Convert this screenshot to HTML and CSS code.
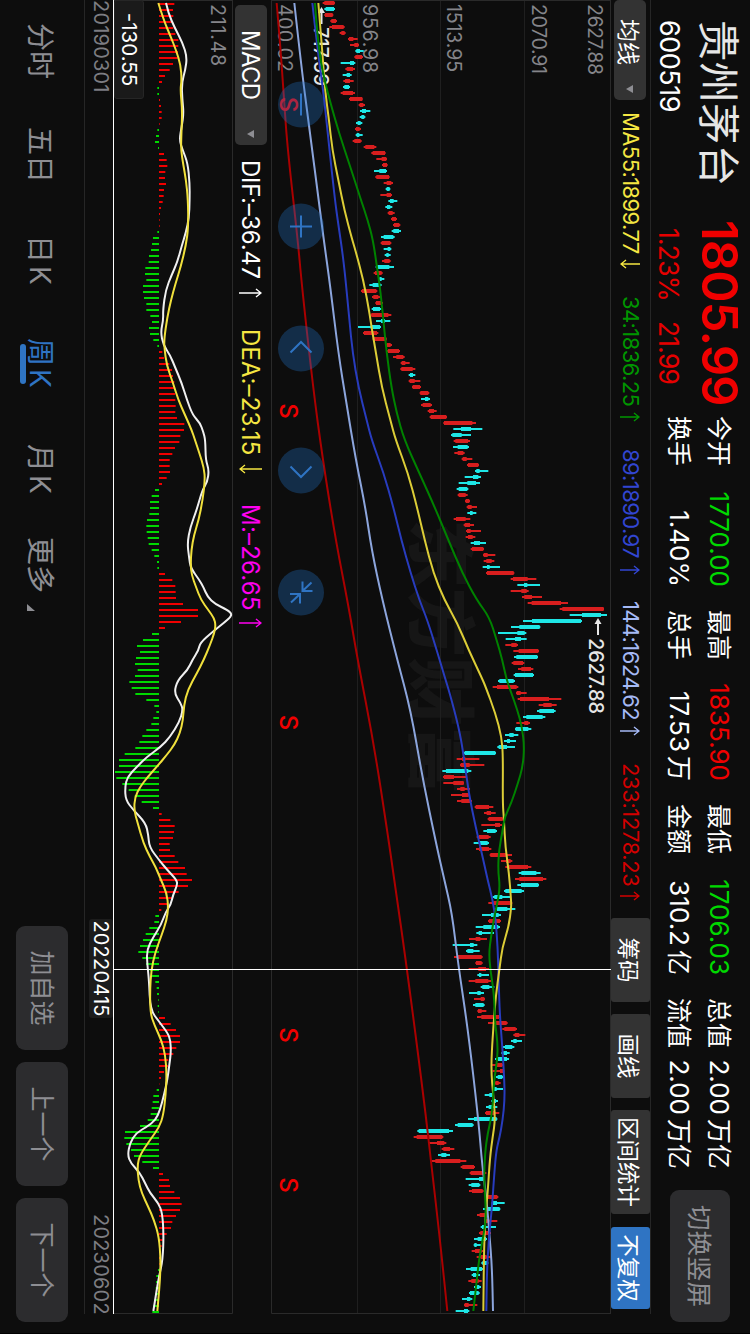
FILE: index.html
```html
<!DOCTYPE html>
<html lang="zh-CN">
<head>
  <meta charset="UTF-8" />
  <meta name="viewport" content="width=device-width, initial-scale=1.0"/>
  <title>贵州茅台 600519</title>
  <link rel="stylesheet" href="styles.css">
</head>
<body>
  <div class="screen">

    <header class="quote">
      <div class="quote-name">
        <h1>贵州茅台</h1>
        <div class="code">600519</div>
      </div>
      <div class="quote-price">
        <div class="price">1805.99</div>
        <div class="change"><span>1.23%</span><span>21.99</span></div>
      </div>
      <div class="stats">
        <div class="stat"><span>今开</span><span class="down">1770.00</span></div>
        <div class="stat"><span>最高</span><span class="up">1835.90</span></div>
        <div class="stat"><span>最低</span><span class="down">1706.03</span></div>
        <div class="stat"><span>总值</span><span>2.00<i>万亿</i></span></div>
        <div class="stat"><span>换手</span><span>1.40%</span></div>
        <div class="stat"><span>总手</span><span>17.53<i>万</i></span></div>
        <div class="stat"><span>金额</span><span>310.2<i>亿</i></span></div>
        <div class="stat"><span>流值</span><span>2.00<i>万亿</i></span></div>
      </div>
      <button class="rotate-btn">切换竖屏</button>
    </header>

    <div class="ma-bar">
      <button class="picker picker-ma">均线<span class="caret"></span></button>
      <div class="ma-list">
        <div class="ma ma55"><span>MA55:1899.77</span><svg class="arrow" viewBox="0 0 10 20"><path d="M5 0V19M1 14L5 19L9 14"/></svg></div>
        <div class="ma ma34"><span>34:1836.25</span><svg class="arrow" viewBox="0 0 10 20"><path d="M5 20V1M1 6L5 1L9 6"/></svg></div>
        <div class="ma ma89"><span>89:1890.97</span><svg class="arrow" viewBox="0 0 10 20"><path d="M5 20V1M1 6L5 1L9 6"/></svg></div>
        <div class="ma ma144"><span>144:1624.62</span><svg class="arrow" viewBox="0 0 10 20"><path d="M5 20V1M1 6L5 1L9 6"/></svg></div>
        <div class="ma ma233"><span>233:1278.23</span><svg class="arrow" viewBox="0 0 10 20"><path d="M5 20V1M1 6L5 1L9 6"/></svg></div>
      </div>
      <div class="tools">
        <button>筹码</button>
        <button>画线</button>
        <button class="wide">区间统计</button>
        <button class="active">不复权</button>
      </div>
    </div>

    <div class="charts">
      <svg id="kline" class="kline" width="1314" height="340"></svg>

      <div class="macd-bar">
        <button class="picker picker-macd">MACD<span class="caret"></span></button>
        <div class="ma dif"><span>DIF:–36.47</span><svg class="arrow" viewBox="0 0 10 23"><path d="M5 23V1M1 6L5 1L9 6"/></svg></div>
        <div class="ma dea"><span>DEA:–23.15</span><svg class="arrow" viewBox="0 0 10 23"><path d="M5 0V22M1 17L5 22L9 17"/></svg></div>
        <div class="ma m"><span>M:–26.65</span><svg class="arrow" viewBox="0 0 10 23"><path d="M5 23V1M1 6L5 1L9 6"/></svg></div>
      </div>

      <div class="macd-panel">
        <svg id="macd" width="1314" height="119"></svg>
        <div class="value-tag">-130.55</div>
      </div>
      <div class="crosshair"></div>
    </div>

    <div class="dates">
      <span>20190301</span>
      <span class="date-tag">20220415</span>
      <span>20230602</span>
    </div>

    <footer class="footer">
      <nav class="tabs">
        <a>分时</a>
        <a>五日</a>
        <a>日<b>K</b></a>
        <a class="active">周<b>K</b></a>
        <a>月<b>K</b></a>
        <a class="more">更多</a>
      </nav>
      <div class="actions">
        <button>加自选</button>
        <button>上一个</button>
        <button>下一个</button>
      </div>
    </footer>
  </div>

  <script src="chart.js"></script>
</body>
</html>
```

FILE: styles.css
```css
* {
  box-sizing: border-box;
}

html {
  overflow: hidden;
  background: #000;
}

body {
  margin: 0;
  width: 750px;
  height: 1334px;
  overflow: hidden;
  font-family: Inter, "Noto Sans CJK SC", sans-serif;
  color: #fff;
}

/* landscape screen shown on a portrait device */
.screen {
  width: 1333px;
  height: 750px;
  display: flex;
  flex-direction: column;
  overflow: hidden;
  background: #0d0d0d;
  transform-origin: 0 0;
  transform: translateX(750px) rotate(90deg);
}

button {
  border: none;
  padding: 0;
  margin: 0;
  color: #fff;
  background: #333;
  font-family: inherit;
  white-space: nowrap;
}

/* quote header */
.quote {
  display: flex;
  height: 99px;
  flex: none;
}

.quote-name {
  width: 220px;
  padding-left: 20px;
}

h1 {
  margin: 0;
  height: 62px;
  line-height: 65px;
  font-size: 41.5px;
  font-weight: 400;
  color: #e6e6e6;
}

.code,
.change {
  height: 38px;
  line-height: 38px;
  font-size: 27px;
  letter-spacing: -0.5px;
}

.quote-price {
  width: 196px;
}

.price {
  height: 62px;
  line-height: 62px;
  font-size: 49px;
  font-weight: 600;
  letter-spacing: -0.9px;
  color: #f00000;
}

.change {
  display: flex;
  gap: 20px;
  padding-left: 8px;
  font-size: 26.5px;
  letter-spacing: -0.8px;
  color: #e60000;
}

.stats {
  display: grid;
  grid-template-columns: repeat(4, 171px);
  grid-template-rows: 40px 40px;
  column-gap: 23px;
  padding-top: 11px;
  font-size: 25px;
}

.stat {
  display: flex;
  justify-content: space-between;
  line-height: 40px;
  white-space: nowrap;
}

.stat span:last-child {
  font-size: 26px;
}

.stat i {
  font-style: normal;
  font-size: 25px;
  margin-left: 4px;
}

.up {
  color: #f00000;
}

.down {
  color: #00d800;
}

.rotate-btn {
  width: 132px;
  height: 60px;
  margin: 20px 0 0 21px;
  padding-bottom: 4px;
  border-radius: 9px;
  background: #2c2c2e;
  color: #8e8e93;
  font-size: 25.5px;
}

/* moving averages */
.ma-bar {
  display: flex;
  flex: none;
  width: 1314px;
  height: 40px;
  border-top: 1px solid #262626;
}

.picker {
  display: flex;
  align-items: center;
  justify-content: space-between;
  height: 32px;
  border-radius: 5px;
}

.picker-ma {
  width: 100px;
  margin-top: 4px;
  padding: 0 7px 0 19px;
  font-size: 23px;
}

.caret {
  border: 4px solid transparent;
  border-top: 7px solid #8e8e93;
  border-bottom: none;
}

.ma-list {
  width: 818px;
  display: flex;
  padding-left: 12px;
}

.ma {
  display: flex;
  flex: none;
  align-items: center;
  justify-content: space-between;
  font-size: 22px;
  line-height: 39px;
  white-space: nowrap;
}

.arrow {
  width: 10px;
  height: 20px;
  fill: none;
  stroke: currentColor;
  stroke-width: 1.4;
}

.ma55 {
  width: 157px;
  margin-right: 27px;
  letter-spacing: -0.6px;
  color: #f5e642;
}

.ma34 {
  width: 126px;
  margin-right: 27px;
  letter-spacing: -0.6px;
  color: #009600;
}

.ma89 {
  width: 126px;
  margin-right: 26px;
  letter-spacing: -0.6px;
  color: #3246d2;
}

.ma144 {
  width: 135px;
  margin-right: 27px;
  letter-spacing: -0.6px;
  color: #a5b9f5;
}

.ma233 {
  width: 138px;
  letter-spacing: -0.4px;
  color: #d20000;
}

.tools {
  display: flex;
  gap: 12px;
}

.tools button {
  width: 84px;
  height: 39px;
  border-radius: 3px;
  font-size: 22.5px;
}

.tools .wide {
  width: 104px;
}

.tools .active {
  width: 82px;
  margin-left: 1px;
  background: #2f74c3;
}

/* charts */
.charts {
  position: relative;
  flex: none;
  width: 1314px;
  height: 498px;
}

.charts svg {
  display: block;
}

.kline text,
#macd text {
  font-size: 19.5px;
  fill: #85858a;
}

.kline .mark {
  fill: #e6e6e6;
  font-size: 20px;
  font-weight: 500;
}

.kline .split {
  fill: #f00000;
  font-size: 24px;
  font-weight: 500;
}

.kline .watermark {
  font-family: "Noto Sans CJK SC", sans-serif;
  font-size: 69px;
  font-weight: 900;
  fill: #161616;
}

.macd-bar {
  display: flex;
  align-items: center;
  height: 38px;
  padding: 2px 0 0 5px;
}

.macd-bar .ma {
  font-size: 24px;
}

.macd-bar .arrow {
  height: 23px;
}

.picker-macd {
  width: 140px;
  padding: 0 7px 0 25px;
  font-size: 24px;
  letter-spacing: -0.7px;
}

.macd-bar .dif {
  width: 138px;
  margin: 0 31px 0 15px;
  letter-spacing: -0.3px;
}

.macd-bar .dea {
  width: 145px;
  margin-right: 30px;
  letter-spacing: 0.1px;
  color: #f5e642;
}

.macd-bar .m {
  width: 124px;
  letter-spacing: 0.2px;
  color: #ff00f0;
}

.macd-panel {
  position: relative;
  height: 120px;
  border-bottom: 1px solid #fff;
}

.value-tag {
  position: absolute;
  left: 0;
  bottom: 0;
  width: 99px;
  height: 30px;
  line-height: 28px;
  border: 1px solid #262626;
  border-radius: 3px;
  background: #1a1a1a;
  font-size: 20.5px;
  text-align: center;
}

.crosshair {
  position: absolute;
  left: 969px;
  top: 0;
  width: 1px;
  height: 497px;
  background: #fff;
}

.dates {
  display: flex;
  justify-content: space-between;
  flex: none;
  width: 1314px;
  height: 29px;
  border-bottom: 1px solid #262626;
  line-height: 24px;
  font-size: 20px;
  letter-spacing: 0.2px;
  color: #7d7d82;
}

.dates span {
  width: 100px;
}

.dates span:last-child {
  text-align: right;
}

.dates .date-tag {
  width: 99px;
  height: 24px;
  margin-left: 723px;
  margin-right: 100px;
  border-radius: 3px;
  background: #1c1c1c;
  color: #fff;
  text-align: center;
}

/* bottom bar */
.footer {
  display: flex;
  flex: 1;
  justify-content: space-between;
  padding: 16px 11px 0 23px;
}

.tabs {
  display: flex;
  color: #8e8e93;
  font-size: 28px;
  line-height: 56px;
}

.tabs a {
  position: relative;
  width: 57px;
  margin-right: 47px;
  white-space: nowrap;
}

.tabs b {
  font-weight: 400;
  margin-left: 3px;
}

.tabs a:nth-child(2) {
  margin-right: 51px;
}

.tabs a:nth-child(3) {
  margin-right: 46px;
}

.tabs a:nth-child(4) {
  margin-right: 49px;
}

.tabs a:nth-child(5) {
  margin-right: 36px;
}

.tabs .active {
  color: #2f74c3;
}

.tabs .active::after {
  content: "";
  position: absolute;
  left: 6px;
  top: 42px;
  width: 40px;
  height: 6px;
  border-radius: 3px;
  background: #2f74c3;
}

.tabs .more::after {
  content: "";
  position: absolute;
  left: 67px;
  top: 33px;
  border-left: 7px solid transparent;
  border-bottom: 8px solid #8e8e93;
}

.actions {
  display: flex;
  gap: 12px;
}

.actions button {
  width: 124px;
  height: 52px;
  padding-bottom: 4px;
  border-radius: 9px;
  background: #2c2c2e;
  color: #8e8e93;
  font-size: 25px;
}
```

FILE: chart.js
```js
const STEP = 6;
const RED = '#d81e1e';
const CYAN = '#1ee6e6';

// colour, low, body bottom, body top, high (thirds of a pixel)
const candles = `
r158,163,193,195 c163,167,192,195 r163,165,188,190 r181,184,198,201 r178,186,221,224 r209,214,224,227
r234,237,250,263 r240,253,265,267 c256,259,270,281 r253,256,276,279 c212,240,252,256 r226,230,249,255
c218,230,240,245 r220,225,240,251 c219,223,237,240 r212,218,249,255 r237,240,277,278 r266,269,280,285
c270,276,288,301 c269,274,283,286 c258,263,272,277 r255,258,269,273 c257,260,268,278 r248,253,272,275
r281,286,313,319 r304,308,345,347 r319,335,349,351 r336,339,351,353 c312,328,348,351 r316,319,357,359
r341,350,364,369 c347,350,359,361 r331,350,363,366 c355,360,371,382 c346,351,361,367 r353,356,368,374
r363,366,378,381 r369,372,388,391 c365,370,387,393 c333,341,370,374 r332,335,361,364 c341,353,361,364
c344,349,356,362 r336,343,359,362 c317,322,358,372 r311,315,335,338 c325,328,335,343 c298,308,331,335
r273,276,319,322 r306,310,325,330 r316,318,336,339 c305,309,330,334 r302,304,355,364 c318,333,345,361
c264,302,330,333 r279,282,321,325 r308,311,349,350 r348,350,362,366 r350,354,387,390 r369,379,400,404
r392,395,406,419 r391,394,428,436 c416,420,429,436 r416,419,434,451 r426,428,450,453 r449,451,475,478
c453,465,475,480 r453,458,482,486 r473,477,492,500 r479,482,529,531 r520,522,607,618 c550,573,603,637
c543,547,575,603 r551,556,594,600 c549,563,593,597 r553,563,580,584 r575,578,590,607 r591,594,625,627
c615,619,629,655 c584,609,625,633 c566,592,618,630 c560,566,592,595 r563,566,587,593 r585,587,598,600
r590,593,605,621 c592,600,608,619 r551,558,587,601 r581,584,600,612 r588,591,602,633 r587,594,608,616
c602,612,630,648 r602,606,640,642 r639,641,653,676 r641,649,665,673 c638,651,659,690 r648,651,731,733
r722,729,773,799 c742,762,772,810 r722,754,770,776 r756,763,786,816 r773,785,873,894 r869,877,1001,1002
c899,936,993,1011 c759,786,933,936 c723,748,809,811 c684,742,764,769 c707,735,753,770 r706,724,740,744
r730,746,805,807 c732,739,802,804 r725,730,759,763 r744,754,783,790 c731,735,789,792 c684,688,731,735
r668,681,740,745 r738,740,752,770 r743,750,837,874 r806,820,845,860 c801,808,852,857 c759,769,818,826
r739,763,775,780 c735,737,775,784 c705,718,731,745 c702,711,720,738 c682,686,711,735 c580,584,676,678
r560,576,586,628 r570,572,599,643 c517,528,595,604 r519,522,552,589 r520,550,581,582 r561,571,584,600
r543,576,596,598 r561,574,600,606 r614,617,657,670 r642,650,663,677 r653,656,698,701 r634,675,690,696
c640,651,677,681 r620,627,656,662 c611,629,653,657 r618,627,657,664 r659,661,709,726 r693,708,722,727
r706,716,774,784 c746,754,799,812 r735,748,819,829 c742,753,805,807 c702,706,755,762 c668,673,697,721
r655,670,725,727 c675,681,712,736 c636,663,686,693 r654,657,690,693 c617,640,685,690 c619,626,636,672
r597,617,631,651 c548,600,611,622 c588,592,610,629 r552,561,635,638 r616,618,635,638 r596,625,648,657
c622,627,634,657 r596,616,655,664 c632,637,658,673 c597,622,632,642 r612,632,643,645 c609,616,641,644
r622,624,635,649 r621,634,687,690 r654,678,710,713 r697,703,737,741 r730,734,748,766 c723,730,740,756
c697,705,727,733 c694,700,711,719 c675,684,711,717 r665,678,697,701 r668,690,699,703 c678,683,697,703
r672,676,686,692 c666,670,680,699 c644,658,666,669 c664,668,678,684 c648,656,668,682 r645,648,672,688
c594,612,680,682 c555,563,608,611 c442,446,537,549 r431,440,517,520 r477,501,523,529 r515,520,540,553
c504,514,529,540 r484,496,571,589 r572,577,612,615 r599,602,640,649 c587,627,640,642 c596,604,628,631
r597,606,638,641 r650,653,682,685 c665,668,681,704 c639,648,689,691 r621,629,645,648 r645,648,658,682
c632,636,646,678 r627,631,655,663 c612,623,648,651 c611,613,620,635 r605,615,635,640 r620,632,650,663
c634,637,651,655 c588,602,636,639 c605,609,618,630 r595,604,626,635 c612,618,628,633 c597,600,626,629
c576,591,601,607 r582,584,596,622 c557,582,594,598`.trim().split(/\s+/);

// x, value pairs
const averages = [
  ['#aa0000', [3,20, 50,32, 100,42, 150,53, 239,83, 287,96, 387,129, 459,158, 540,197, 607,236, 660,263, 743,311, 827,350, 880,373, 969,411, 1100,462, 1167,485, 1240,510, 1311,532]],
  ['#8ca5dc', [3,73, 67,94, 133,120, 200,146, 239,161, 287,181, 353,205, 403,229, 459,257, 507,286, 550,305, 600,337, 660,382, 710,422, 777,457, 843,498, 880,523, 913,546, 963,564, 1030,594, 1119,625, 1167,637, 1200,650, 1233,658, 1267,666, 1311,669]],
  ['#283cbe', [3,127, 33,137, 67,150, 100,163, 133,173, 167,184, 200,195, 220,203, 263,222, 320,238, 353,248, 387,265, 420,290, 440,305, 473,341, 507,370, 540,394, 573,422, 600,448, 620,472, 650,500, 679,526, 693,539, 727,566, 753,580, 793,596, 827,617, 860,640, 880,653, 900,668, 920,677, 947,683, 980,686, 1013,689, 1047,697, 1080,703, 1100,704, 1120,698, 1137,689, 1150,679, 1173,673, 1207,666, 1233,658, 1267,651, 1311,649]],
  ['#dccd37', [3,145, 60,159, 90,165, 120,177, 150,187, 180,205, 210,223, 239,246, 250,256, 280,280, 310,297, 330,306, 353,318, 387,335, 420,361, 440,377, 473,414, 507,441, 540,464, 573,490, 600,523, 623,562, 650,596, 679,637, 687,647, 713,676, 737,695, 757,699, 803,698, 820,702, 847,706, 873,717, 899,723, 907,724, 927,716, 947,697, 970,688, 997,677, 1023,671, 1053,665, 1073,664, 1093,669, 1119,676, 1137,668, 1157,660, 1193,653, 1213,647, 1247,642, 1311,640]],
  ['#008200', [3,135, 33,141, 67,155, 83,166, 100,179, 133,207, 167,241, 200,273, 220,293, 240,309, 267,321, 293,332, 320,340, 353,350, 387,364, 413,380, 440,403, 473,448, 507,494, 540,535, 573,577, 600,620, 617,658, 640,680, 660,697, 679,709, 693,724, 710,742, 727,756, 747,763, 767,758, 783,744, 803,724, 817,704, 830,698, 850,687, 870,684, 887,690, 903,682, 920,671, 937,663, 953,657, 970,661, 993,672, 1023,675, 1043,683, 1060,682, 1080,672, 1113,667, 1133,653, 1153,645, 1180,642, 1210,648, 1227,645, 1243,636, 1260,627, 1287,618, 1311,610]]
];

const ZERO = 477;
const bars = [
  523,519,520,518,520,526,535,535,534,533,519,509,495,486,472,472,480,483,485,485,479,472,468,465,474,
  492,500,502,496,495,498,492,491,488,483,480,479,479,472,459,456,453,447,446,436,435,439,429,429,432,
  439,439,451,456,447,450,460,472,487,492,508,516,519,523,525,525,526,527,526,531,553,552,541,538,525,
  517,509,509,510,500,486,465,455,450,450,448,441,439,440,443,446,455,463,471,472,495,517,526,527,528,
  549,594,594,543,495,456,429,411,420,408,405,413,405,388,395,406,439,463,469,460,454,439,427,418,406,
  374,357,357,345,349,367,386,404,425,459,485,511,524,522,519,509,510,524,535,555,560,576,564,536,519,
  501,484,466,463,448,437,429,420,415,427,438,449,456,466,470,471,475,473,475,495,512,528,540,540,529,
  520,505,504,492,483,478,470,460,458,455,452,443,420,375,373,379,393,402,427,459,489,507,510,523,540,
  545,540,528,517,513,500,488,485,483,480,479,474,469,468,467,466,463,460,457
];

const dif = [3,498, 13,505, 27,523, 43,548, 57,561, 70,556, 83,545, 100,547, 113,551, 127,545, 140,538, 150,548, 163,563, 183,569, 200,569, 218,567, 232,558, 245,546, 262,532, 275,515, 290,497, 310,489, 320,490, 332,482, 345,490, 355,510, 367,525, 383,545, 400,561, 415,578, 423,600, 432,610, 440,616, 460,617, 470,627, 482,622, 490,607, 510,590, 527,571, 543,562, 557,567, 568,572, 580,598, 587,610, 597,623, 604,645, 610,683, 615,698, 622,675, 632,637, 643,600, 650,596, 660,577, 670,563, 680,533, 693,522, 703,542, 710,549, 722,538, 737,510, 747,482, 757,440, 767,410, 777,382, 787,375, 800,377, 810,400, 823,437, 835,445, 847,448, 860,477, 870,502, 880,530, 885,532, 895,519, 905,512, 912,497, 925,483, 937,460, 950,440, 965,442, 980,447, 1010,451, 1022,478, 1033,503, 1040,511, 1052,513, 1065,508, 1080,502, 1095,492, 1110,480, 1120,467, 1127,440, 1133,408, 1143,390, 1155,383, 1163,392, 1173,420, 1183,435, 1193,450, 1203,475, 1213,487, 1235,491, 1260,488, 1275,478, 1290,470, 1303,464, 1311,460];
const dea = [3,475, 20,491, 35,510, 50,528, 65,542, 80,545, 90,541, 110,547, 135,544, 150,543, 165,550, 180,558, 200,564, 227,565, 245,558, 267,542, 283,527, 300,513, 317,502, 340,492, 350,494, 365,500, 383,519, 400,535, 415,555, 430,575, 440,585, 453,598, 468,612, 480,615, 500,608, 520,596, 535,582, 550,574, 565,572, 575,575, 587,588, 600,603, 610,625, 618,642, 625,647, 633,643, 645,630, 660,611, 673,591, 690,563, 705,552, 720,549, 733,540, 745,523, 755,500, 765,475, 777,443, 787,420, 797,405, 810,402, 823,413, 843,430, 857,450, 867,467, 880,483, 893,500, 907,505, 920,500, 935,485, 953,465, 970,454, 990,450, 1013,451, 1025,463, 1040,484, 1055,496, 1075,500, 1095,497, 1115,490, 1127,478, 1140,450, 1155,420, 1165,412, 1180,415, 1193,425, 1207,445, 1220,462, 1237,477, 1260,482, 1280,480, 1300,475, 1311,472];

// curve through the midpoints of neighbouring points
function curve(list, base, color) {
  const pts = [];
  for (let i = 0; i < list.length; i += 2) {
    pts.push([list[i], base - list[i + 1] / 3]);
  }
  let d = `M${pts[0]}`;
  for (let i = 1; i < pts.length - 1; i++) {
    const mx = (pts[i][0] + pts[i + 1][0]) / 2;
    const my = (pts[i][1] + pts[i + 1][1]) / 2;
    d += `Q${pts[i]} ${mx},${my}`;
  }
  d += `L${pts[pts.length - 1]}`;
  return `<path d="${d}" fill="none" stroke="${color}" stroke-width="2"/>`;
}

function rect(x, y, w, h, fill) {
  return `<rect x="${x}" y="${y}" width="${w}" height="${h}" fill="${fill}"/>`;
}

function label(x, y, text, width, cls = '') {
  return `<text class="${cls}" x="${x}" y="${y}" textLength="${width}">${text}</text>`;
}

function drawKline() {
  const base = 341;
  let out = '<text class="watermark" x="519" y="196">东方财富</text>';

  for (const y of [86, 170, 253]) {
    out += rect(0, y, 1313, 1, '#1f1f1f');
  }
  out += '<path d="M0 .5H1313M.5 0V339M0 339.5H1313.5V0" fill="none" stroke="#2a2a2a"/>';

  out += label(4, 23, '2627.88', 71);
  out += label(4, 79, '2070.91', 70);
  out += label(4, 164, '1513.95', 68);
  out += label(4, 248, '956.98', 69);
  out += label(4, 333, '400.02', 68);

  out += label(27, 297, '717.99', 59, 'mark');
  out += '<path d="M24 289.5H11" stroke="#e6e6e6" stroke-width="2"/><path d="M7 289.5L13 286V293Z" fill="#e6e6e6"/>';
  out += label(638, 22, '2627.88', 76, 'mark');
  out += '<path d="M635 13H622" stroke="#e6e6e6" stroke-width="2"/><path d="M618 13L624 9.5V16.5Z" fill="#e6e6e6"/>';

  candles.forEach((c, i) => {
    const color = c[0] === 'r' ? RED : CYAN;
    const [low, bottom, top, high] = c.slice(1).split(',').map(v => v / 3);
    const x = 3 + i * STEP;
    out += rect(x - 1, base - high, 2, high - low, color);
    out += rect(x - 2, base - top, 4, top - bottom, color);
  });

  averages.forEach(([color, list]) => out += curve(list, base, color));

  for (const x of [104.5, 411, 722.5, 1035, 1185]) {
    out += `<text class="split" x="${x}" y="331" text-anchor="middle">S</text>`;
  }

  const icons = [
    'M-11 0H11',
    'M-11 0H11M0 -11V11',
    'M4 -10.5L-6.5 0L4 10.5',
    'M-4 -10.5L6.5 0L-4 10.5',
    'M-11 -1.5H-1.5V-11.5M-1.5 -1.5L-10 -10.5M11 1H1.5V11M1.5 1L10 10'
  ];
  icons.forEach((d, i) => {
    out += `<g transform="translate(${104.5 + i * 122} 310)">
      <circle r="23" fill="#2373c8" fill-opacity=".32"/>
      <path d="${d}" fill="none" stroke="#2f74c3" stroke-width="2"/></g>`;
  });

  document.getElementById('kline').innerHTML = out;
}

function drawMacd() {
  const base = 233;
  let out = '<path d="M0 .5H1313.5V120M.5 0V120" fill="none" stroke="#2a2a2a"/>';
  out += label(4, 22, '211.48', 62);

  bars.forEach((v, i) => {
    const top = base - Math.max(v, ZERO) / 3;
    out += rect(3 + i * STEP, top, 2, Math.abs(v - ZERO) / 3, v > ZERO ? '#f00000' : '#00d800');
  });

  out += curve(dif, base, '#f0f0f0');
  out += curve(dea, base, '#f0e03c');
  document.getElementById('macd').innerHTML = out;
}

drawKline();
drawMacd();
```
